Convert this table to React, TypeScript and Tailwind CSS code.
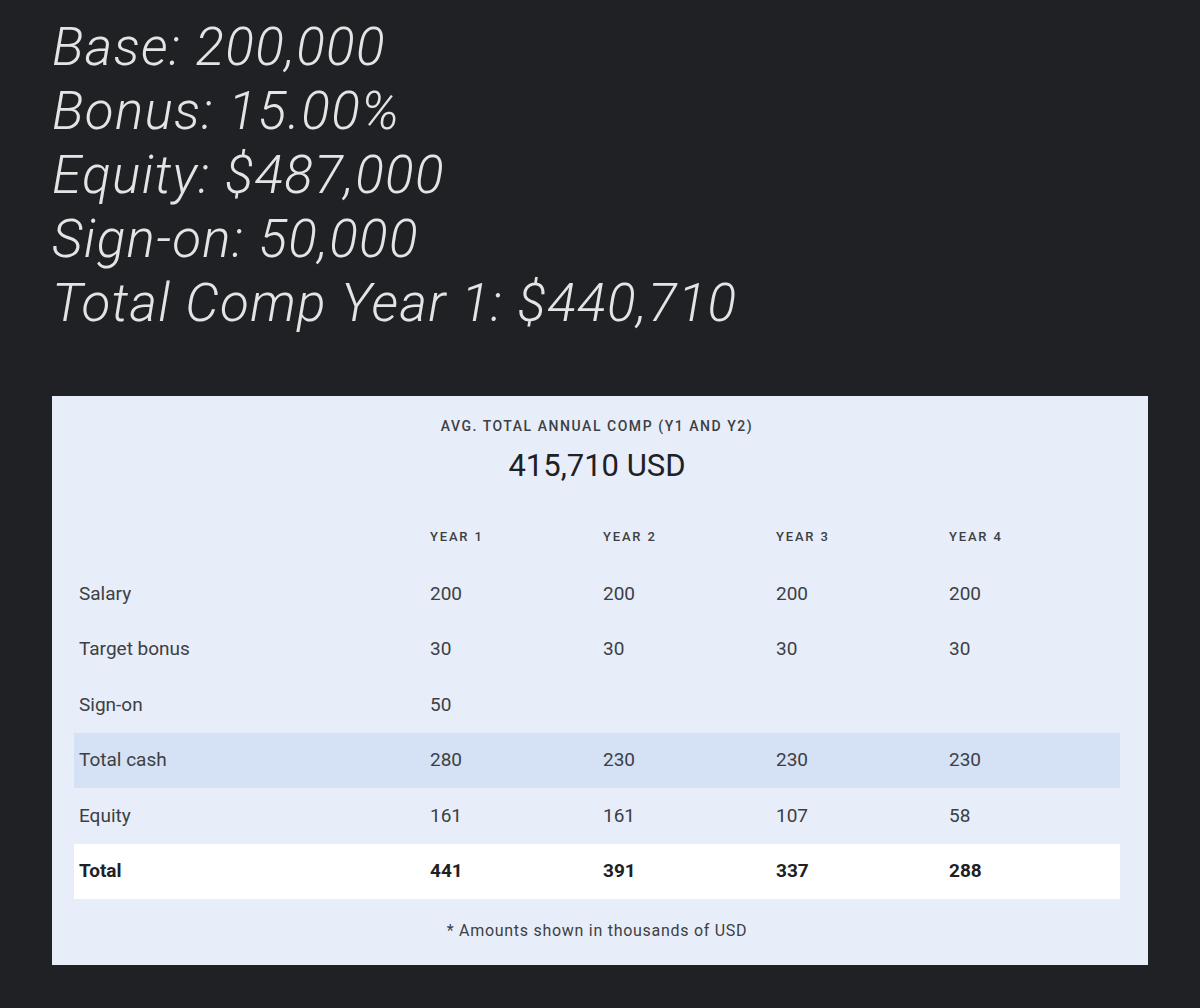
const years = ["YEAR 1", "YEAR 2", "YEAR 3", "YEAR 4"];

type Row = { label: string; values: string[]; tone?: "cash" | "total" };

const rows: Row[] = [
  { label: "Salary", values: ["200", "200", "200", "200"] },
  { label: "Target bonus", values: ["30", "30", "30", "30"] },
  { label: "Sign-on", values: ["50", "", "", ""] },
  { label: "Total cash", values: ["280", "230", "230", "230"], tone: "cash" },
  { label: "Equity", values: ["161", "161", "107", "58"] },
  { label: "Total", values: ["441", "391", "337", "288"], tone: "total" },
];

const summary = [
  "Base: 200,000",
  "Bonus: 15.00%",
  "Equity: $487,000",
  "Sign-on: 50,000",
  "Total Comp Year 1: $440,710",
];

export default function App() {
  return (
    <div className="min-h-[1008px] w-[1200px] bg-[#1f2125] pt-[15px] font-['Roboto',sans-serif]">
      {/* offer summary */}
      <div className="pl-[52px]">
        {summary.map((line) => (
          <div
            key={line}
            className="text-[53px] font-light italic leading-[64px] tracking-[0.025em] text-[#e4e4e4]"
          >
            {line}
          </div>
        ))}
      </div>

      {/* comp card */}
      <div className="mx-[52px] mt-[61px] h-[569px] bg-[#e8edfa] pl-[22px] pr-[28px] pt-[23px] text-[#3c4043]">
        <div className="text-center text-[14px] font-medium uppercase tracking-[0.11em] leading-[14px] text-[#3c4043]">
          Avg. total annual comp (Y1 and Y2)
        </div>
        <div className="mt-[15px] text-center text-[31px] leading-[36px] text-[#202124]">
          415,710 USD
        </div>

        <div className="mt-[39px] grid grid-cols-[351px_173px_173px_173px_1fr]">
          <div className="h-[28px]" />
          {years.map((y) => (
            <div
              key={y}
              className="pl-[5px] text-[13px] font-medium leading-[28px] tracking-[0.14em] text-[#3c4043]"
            >
              {y}
            </div>
          ))}
        </div>

        <div className="mt-[15px] flex flex-col">
          {rows.map((r) => (
            <div
              key={r.label}
              className={
                "grid h-[55.5px] grid-cols-[351px_173px_173px_173px_1fr] items-center text-[19px] " +
                (r.tone === "cash"
                  ? "bg-[#d5e1f5]"
                  : r.tone === "total"
                    ? "bg-white font-bold text-[#202124]"
                    : "")
              }
            >
              <div className="pl-[5px]">{r.label}</div>
              {r.values.map((v, i) => (
                <div key={i} className="pl-[5px]">
                  {v}
                </div>
              ))}
            </div>
          ))}
        </div>

        <div className="mt-[22px] text-center text-[16px] leading-[20px] tracking-[0.045em] text-[#3c4043]">
          * Amounts shown in thousands of USD
        </div>
      </div>
    </div>
  );
}
